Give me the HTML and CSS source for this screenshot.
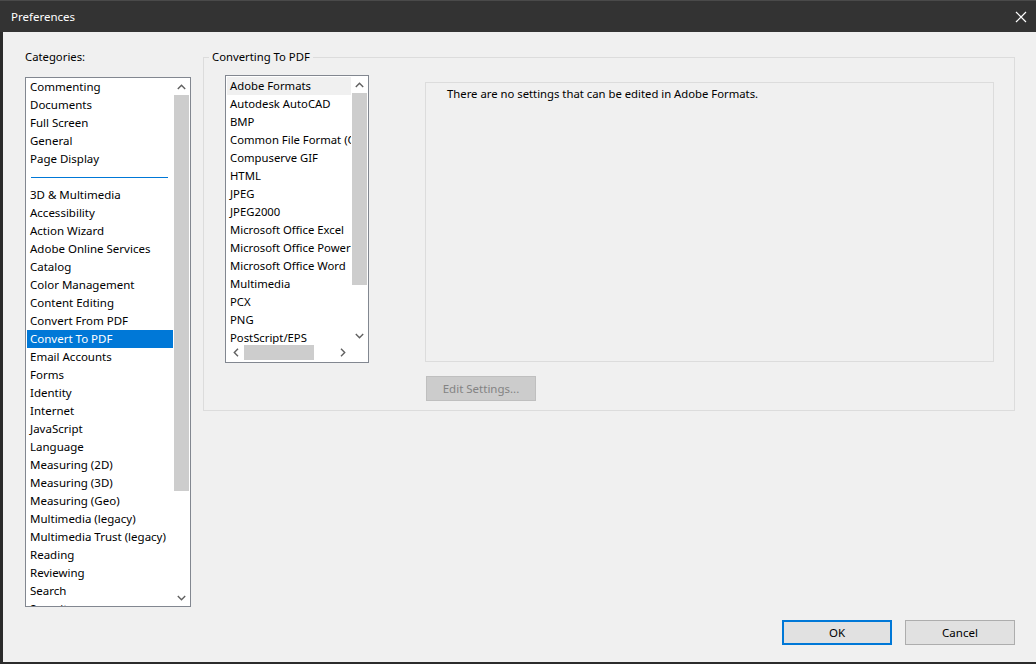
FILE: index.html
```html
<!DOCTYPE html>
<html>
<head>
<meta charset="utf-8">
<link rel="stylesheet" href="styles.css">
</head>
<body>
<div class="app">
  <div class="titlebar">
    <span class="title">Preferences</span>
    <svg class="close" width="12" height="12" viewBox="0 0 12 12"><path d="M1 1 L11 11 M11 1 L1 11" stroke="#fff" stroke-width="1.2" fill="none"/></svg>
  </div>
  <div class="main">
    <div class="top">
      <div class="leftcol">
        <div class="label">Categories:</div>
        <div class="listbox cats">
          <div class="items">
            <div class="item">Commenting</div>
            <div class="item">Documents</div>
            <div class="item">Full Screen</div>
            <div class="item">General</div>
            <div class="item">Page Display</div>
            <div class="sep"><span></span></div>
            <div class="item">3D &amp; Multimedia</div>
            <div class="item">Accessibility</div>
            <div class="item">Action Wizard</div>
            <div class="item">Adobe Online Services</div>
            <div class="item">Catalog</div>
            <div class="item">Color Management</div>
            <div class="item">Content Editing</div>
            <div class="item">Convert From PDF</div>
            <div class="item selected">Convert To PDF</div>
            <div class="item">Email Accounts</div>
            <div class="item">Forms</div>
            <div class="item">Identity</div>
            <div class="item">Internet</div>
            <div class="item">JavaScript</div>
            <div class="item">Language</div>
            <div class="item">Measuring (2D)</div>
            <div class="item">Measuring (3D)</div>
            <div class="item">Measuring (Geo)</div>
            <div class="item">Multimedia (legacy)</div>
            <div class="item">Multimedia Trust (legacy)</div>
            <div class="item">Reading</div>
            <div class="item">Reviewing</div>
            <div class="item">Search</div>
            <div class="item">Security</div>
          </div>
          <div class="vscroll cats-scroll">
            <div class="arrow"><svg width="9" height="6" viewBox="0 0 9 6"><path d="M0.8 5 L4.5 1.3 L8.2 5" stroke="#606060" stroke-width="1.4" fill="none"/></svg></div>
            <div class="track"><div class="thumb"></div></div>
            <div class="arrow"><svg width="9" height="6" viewBox="0 0 9 6"><path d="M0.8 1 L4.5 4.7 L8.2 1" stroke="#606060" stroke-width="1.4" fill="none"/></svg></div>
          </div>
        </div>
      </div>
      <fieldset class="group">
        <legend>Converting To PDF</legend>
        <div class="groupbody">
          <div class="listbox formats">
            <div class="fgrid">
              <div class="items">
                <div class="item hover">Adobe Formats</div>
                <div class="item">Autodesk AutoCAD</div>
                <div class="item">BMP</div>
                <div class="item">Common File Format (CFF)</div>
                <div class="item">Compuserve GIF</div>
                <div class="item">HTML</div>
                <div class="item">JPEG</div>
                <div class="item">JPEG2000</div>
                <div class="item">Microsoft Office Excel</div>
                <div class="item">Microsoft Office PowerPoint</div>
                <div class="item">Microsoft Office Word</div>
                <div class="item">Multimedia</div>
                <div class="item">PCX</div>
                <div class="item">PNG</div>
                <div class="item">PostScript/EPS</div>
              </div>
              <div class="vscroll fmt-scroll">
                <div class="arrow"><svg width="9" height="6" viewBox="0 0 9 6"><path d="M0.8 5 L4.5 1.3 L8.2 5" stroke="#606060" stroke-width="1.4" fill="none"/></svg></div>
                <div class="track"><div class="thumb"></div></div>
                <div class="arrow"><svg width="9" height="6" viewBox="0 0 9 6"><path d="M0.8 1 L4.5 4.7 L8.2 1" stroke="#606060" stroke-width="1.4" fill="none"/></svg></div>
              </div>
              <div class="hscroll">
                <div class="harrow"><svg width="6" height="9" viewBox="0 0 6 9"><path d="M5 0.8 L1.3 4.5 L5 8.2" stroke="#606060" stroke-width="1.4" fill="none"/></svg></div>
                <div class="htrack"><div class="hthumb"></div></div>
                <div class="harrow"><svg width="6" height="9" viewBox="0 0 6 9"><path d="M1 0.8 L4.7 4.5 L1 8.2" stroke="#606060" stroke-width="1.4" fill="none"/></svg></div>
              </div>
              <div class="corner"></div>
            </div>
          </div>
          <div class="settings">
            <div class="panel">There are no settings that can be edited in Adobe Formats.</div>
            <button class="btn disabled">Edit Settings...</button>
          </div>
        </div>
      </fieldset>
    </div>
    <div class="footer">
      <button class="btn default">OK</button>
      <button class="btn">Cancel</button>
    </div>
  </div>
</div>
</body>
</html>
```

FILE: styles.css
```css
* { box-sizing: border-box; }
html, body { margin: 0; padding: 0; }
body {
  width: 1036px;
  height: 664px;
  overflow: hidden;
  background: #2b2b2b;
  font-family: "Noto Sans", "Open Sans", sans-serif;
  font-size: 11.3px;
  color: #000;
}
.app { display: flex; flex-direction: column; height: 664px; }
.titlebar {
  height: 32px;
  background: #333333;
  border-top: 1px solid #4a4a4a;
  display: flex;
  align-items: center;
  justify-content: space-between;
  padding: 0 9px 0 11px;
  color: #fff;
}
.title { font-size: 11.5px; }
.close { display: block; }
.main {
  flex: 1;
  margin-left: 3px;
  margin-bottom: 2px;
  background: #f0f0f0;
  display: flex;
  flex-direction: column;
  padding: 16px 21px 17px 22px;
}
.top { display: flex; align-items: flex-start; }
.leftcol { width: 166px; flex: none; }
.label { line-height: 18px; height: 18px; margin-bottom: 11px; }
.listbox {
  background: #fff;
  border: 1px solid #828790;
  display: flex;
  overflow: hidden;
}
.cats { height: 530px; padding: 0 0 0 1px; }
.cats .item { font-size: 11.5px; }
.items { flex: 1; min-width: 0; overflow: hidden; }
.item {
  height: 18px;
  line-height: 17px;
  padding-left: 3px;
  white-space: nowrap;
  overflow: hidden;
}
.selected { background: #0078d7; color: #fff; }
.hover { background: #f0f0f0; }
.sep { height: 18px; display: flex; align-items: center; padding: 0 3px 0 4px; }
.sep span { display: block; width: 137px; height: 1px; background: #0078d7; }
.vscroll {
  width: 17px;
  flex: none;
  display: flex;
  flex-direction: column;
  background: #fff;
}
.arrow { height: 17px; display: flex; align-items: center; justify-content: center; flex: none; }
.track { flex: 1; display: flex; flex-direction: column; }
.thumb { background: #cdcdcd; margin: 0 1px; }
.cats-scroll { height: 528px; }
.cats-scroll .thumb { height: 396px; }

.group {
  margin: 0 0 0 12px;
  padding: 9px 20px 9px 21px;
  border: 1px solid #dcdcdc;
  flex: 1;
  min-width: 0;
}
.group legend { padding: 0 3px; margin-left: -16px; line-height: 18px; }
.groupbody { display: flex; align-items: flex-start; }
.formats { width: 144px; height: 288px; padding: 0 1px 1px 1px; flex: none; }
.fgrid {
  display: grid;
  grid-template-columns: 124px 17px;
  grid-template-rows: 268px 17px;
  width: 141px;
}
.formats .items { padding-top: 1px; overflow: hidden; }
.fmt-scroll .thumb { height: 192px; }
.hscroll { display: flex; background: #fff; }
.harrow { width: 17px; flex: none; display: flex; align-items: center; justify-content: center; }
.htrack { flex: 1; display: flex; align-items: center; }
.hthumb { background: #cdcdcd; width: 70px; height: 15px; }
.corner { background: #fff; }

.settings { margin-left: 56px; margin-top: 7px; flex: 1; }
.panel {
  width: 569px;
  height: 280px;
  border: 1px solid #dcdcdc;
  padding: 2px 21px;
  line-height: 18px;
}
.btn {
  font-family: inherit;
  font-size: 11.5px;
  width: 110px;
  height: 25px;
  background: #e1e1e1;
  border: 1px solid #adadad;
  color: #000;
  padding: 0;
  margin: 0;
  display: block;
}
.disabled {
  margin-top: 14px;
  margin-left: 1px;
  background: #cccccc;
  border-color: #bfbfbf;
  color: #838383;
}
.default { border: 2px solid #0078d7; }
.footer { margin-top: auto; display: flex; justify-content: flex-end; gap: 13px; }
```
